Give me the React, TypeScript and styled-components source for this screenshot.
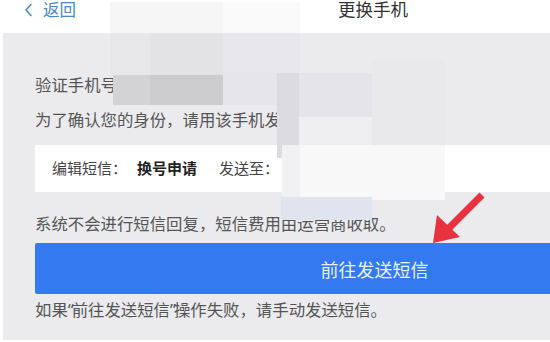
import React from "react";
import styled, { createGlobalStyle } from "styled-components";

const GlobalStyle = createGlobalStyle`
  html, body {
    margin: 0;
    padding: 0;
    background: #ffffff;
    overflow: hidden;
  }
  body {
    font-family: "Noto Sans", "Noto Sans CJK SC", sans-serif;
  }
`;

interface Block {
  x: number;
  y: number;
  w: number;
  h: number;
  color: string;
}

// the mosaic that hides the phone number
const mosaic: Block[] = [
  { x: 110, y: 2, w: 113, h: 31, color: "#f6f6f7" },
  { x: 223, y: 2, w: 77, h: 31, color: "#fafafb" },
  { x: 110, y: 33, w: 40, h: 42, color: "#e7e7e9" },
  { x: 150, y: 33, w: 73, h: 42, color: "#e3e3e5" },
  { x: 223, y: 33, w: 77, h: 40, color: "#e8e8ec" },
  { x: 113, y: 75, w: 37, h: 30, color: "#d3d3d5" },
  { x: 150, y: 75, w: 73, h: 30, color: "#cccccf" },
  { x: 223, y: 73, w: 54, h: 32, color: "#e6e6ea" },
  { x: 277, y: 73, w: 22, h: 85, color: "#dcdce0" },
  { x: 299, y: 73, w: 73, h: 44, color: "#e4e4ea" },
  { x: 299, y: 117, w: 73, h: 40, color: "#efeff1" },
  { x: 372, y: 60, w: 73, h: 85, color: "#e9e9eb" },
  { x: 282, y: 145, w: 18, h: 52, color: "#f1f1f3" },
  { x: 300, y: 145, w: 145, h: 55, color: "#f8f8f8" },
  { x: 281, y: 197, w: 91, h: 23, color: "#dfe4ee" },
];

const App: React.FC = () => (
  <>
    <GlobalStyle />
    <Screen>
      <Header>
        <Back>
          <svg width="9" height="14" viewBox="0 0 9 14">
            <polyline
              points="7,1.5 2,7 7,12.5"
              fill="none"
              stroke="#4a88c6"
              strokeWidth="1.6"
              strokeLinecap="round"
              strokeLinejoin="round"
            />
          </svg>
          <span>返回</span>
        </Back>
        <Title>更换手机</Title>
      </Header>

      <Body>
        <Line>验证手机号</Line>
        <Line $gap={13}>为了确认您的身份，请用该手机发送短信</Line>
        <Card>
          <Label>编辑短信：</Label>
          <Strong>换号申请</Strong>
          <Label>发送至：</Label>
        </Card>
        <Line $gap={21}>系统不会进行短信回复，短信费用由运营商收取。</Line>
        <SendButton>前往发送短信</SendButton>
        <Line $gap={5}>
          如果<Quote>“</Quote>前往发送短信<Quote>”</Quote>操作失败，请手动发送短信。
        </Line>
      </Body>

      {mosaic.map((b, i) => (
        <Tile key={i} $x={b.x} $y={b.y} $w={b.w} $h={b.h} $color={b.color} />
      ))}

      <Arrow width="70" height="70" viewBox="0 0 70 70">
        <line
          x1="64"
          y1="5"
          x2="30"
          y2="39"
          stroke="#e8323f"
          strokeWidth="7"
          strokeLinecap="butt"
        />
        <polygon points="15,53 19,25 42,47" fill="#e8323f" />
      </Arrow>
    </Screen>
  </>
);

export default App;

const Screen = styled.div`
  position: relative;
  width: 746px;
  height: 342px;
  overflow: hidden;
  background: #ffffff;
`;

const Header = styled.header`
  position: relative;
  height: 33px;
  display: flex;
  justify-content: center;
  align-items: flex-start;
  background: #ffffff;
`;

const Back = styled.div`
  position: absolute;
  left: 24px;
  top: 1px;
  display: flex;
  align-items: center;
  gap: 10px;
  height: 17px;
  color: #4a88c6;
  font-size: 16.5px;
  line-height: 17px;
`;

const Title = styled.div`
  color: #333333;
  font-size: 17.5px;
  line-height: 18px;
`;

const Body = styled.main`
  margin-left: 3px;
  height: 307px;
  box-sizing: border-box;
  padding: 41px 32px 0 32px;
  background: #ebebee;
  display: flex;
  flex-direction: column;
`;

const Line = styled.div<{ $gap?: number }>`
  margin-top: ${(p) => p.$gap ?? 0}px;
  height: 22px;
  line-height: 22px;
  font-size: 16.4px;
  color: #555555;
  white-space: nowrap;
`;

const Quote = styled.span`
  letter-spacing: -2px;
`;

const Card = styled.div`
  margin-top: 14px;
  height: 47px;
  box-sizing: border-box;
  padding: 0 17px 3px;
  background: #ffffff;
  display: flex;
  align-items: center;
  font-size: 15px;
`;

const Label = styled.span`
  color: #444444;
  margin-right: 10px;
`;

const Strong = styled.span`
  color: #222222;
  font-weight: 700;
  margin-right: 22px;
`;

const SendButton = styled.div`
  margin-top: 8px;
  height: 51px;
  display: flex;
  align-items: center;
  justify-content: center;
  background: #3479ef;
  border-radius: 2px;
  color: #e9f1ff;
  font-size: 18px;
`;

const Tile = styled.div<{
  $x: number;
  $y: number;
  $w: number;
  $h: number;
  $color: string;
}>`
  position: absolute;
  left: ${(p) => p.$x}px;
  top: ${(p) => p.$y}px;
  width: ${(p) => p.$w}px;
  height: ${(p) => p.$h}px;
  background: ${(p) => p.$color};
`;

const Arrow = styled.svg`
  position: absolute;
  left: 418px;
  top: 190px;
`;
